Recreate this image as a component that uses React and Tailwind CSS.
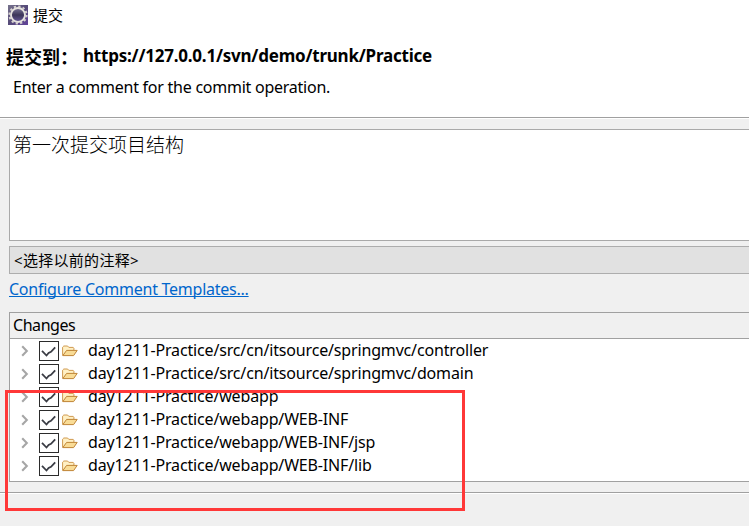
const rows = [
  'day1211-Practice/src/cn/itsource/springmvc/controller',
  'day1211-Practice/src/cn/itsource/springmvc/domain',
  'day1211-Practice/webapp',
  'day1211-Practice/webapp/WEB-INF',
  'day1211-Practice/webapp/WEB-INF/jsp',
  'day1211-Practice/webapp/WEB-INF/lib',
];

function GearIcon() {
  return (
    <svg className="block h-5 w-5 shrink-0" viewBox="0 0 20 20">
      <defs>
        <linearGradient id="gearBg" x1="0" y1="0" x2="1" y2="1">
          <stop offset="0" stopColor="#77738c" />
          <stop offset="0.5" stopColor="#554a78" />
          <stop offset="1" stopColor="#62439a" />
        </linearGradient>
        <linearGradient id="gearCore" x1="0" y1="0" x2="0" y2="1">
          <stop offset="0" stopColor="#7b7698" />
          <stop offset="0.5" stopColor="#3c3558" />
          <stop offset="1" stopColor="#66589a" />
        </linearGradient>
      </defs>
      <rect width="20" height="20" fill="url(#gearBg)" />
      <circle cx="10" cy="10" r="8.6" fill="none" stroke="#d6d2d0" strokeWidth="2" strokeDasharray="2.25 2.253" />
      <circle cx="10" cy="10" r="7" fill="url(#gearCore)" stroke="#e6e2de" strokeWidth="1.9" />
    </svg>
  );
}

function Chevron() {
  return (
    <svg className="block h-3 w-2 shrink-0" viewBox="0 0 8 12" fill="none">
      <path d="M1.2 1.2 5.8 6 1.2 10.8" stroke="#a6a6a6" strokeWidth="2.1" />
    </svg>
  );
}

function Check() {
  return (
    <svg className="ml-[10px] block h-5 w-5 shrink-0" viewBox="0 0 20 20" fill="none">
      <rect x="0.5" y="0.5" width="19" height="19" fill="#fff" stroke="#2b2b2b" />
      <path d="M3 9.8 7.5 14.5 9.6 12 12 10.8 16.2 6.3" stroke="#3a3c44" strokeWidth="1.8" />
    </svg>
  );
}

function Folder() {
  return (
    <svg className="ml-[3px] block h-3 w-4 shrink-0" viewBox="0 0 16 12">
      <path d="M.6 10.4V2.2L1.8 1h3.8l1.2 1.4h4.4l.7.8v2" fill="#fff0c4" stroke="#d09a50" strokeWidth="1" />
      <path d="M.8 10.6 4.6 5.4h10.6l-3.6 5.2Z" fill="#f9dc96" stroke="#bf8436" strokeWidth="1" strokeLinejoin="round" />
    </svg>
  );
}

export default function App() {
  return (
    <div className="relative flex h-[526px] w-[749px] flex-col overflow-hidden bg-[#f0f0f0] font-['Noto_Sans','Noto_Sans_CJK_SC',sans-serif] text-base whitespace-nowrap text-black">
      <header className="h-[119px] shrink-0 border-b border-white bg-white">
        <div className="flex h-full flex-col border-b border-[#a0a0a0]">
          <div className="flex h-[30px] items-center pl-2">
            <GearIcon />
            <span className="ml-[5px] font-['Noto_Sans_CJK_SC',sans-serif] text-[15px] leading-5">提交</span>
          </div>
          <div className="mt-[14px] flex h-6 items-center pl-[6px] text-[17px] font-bold tracking-[-0.22px]">
            <span className="w-[77px] shrink-0 pb-px font-['Noto_Sans_CJK_SC',sans-serif] text-lg leading-[22px] tracking-normal">提交到：</span>
            <span>https://127.0.0.1/svn/demo/trunk/Practice</span>
          </div>
          <p className="mt-[7px] pl-[13px] leading-6 tracking-[-0.25px]">Enter a comment for the commit operation.</p>
        </div>
      </header>

      <main className="flex shrink-0 flex-col pt-[10px] pl-[9px]">
        <div className="h-[112px] border border-r-0 border-[#a9a9a9] bg-white pt-[2px] pl-[3px] font-['Noto_Sans_CJK_SC',sans-serif] text-[19px] leading-6 font-light">
          第一次提交项目结构
        </div>
        <div className="mt-[5px] flex h-7 items-center border border-r-0 border-[#adadad] bg-[#e1e1e1] pl-1 text-[15px] tracking-[0.3px]">
          &lt;选择以前的注释&gt;
        </div>
        <a className="mt-[3px] h-[25px] leading-6 tracking-[-0.25px] text-[#0066cc] underline [text-decoration-skip-ink:none]">Configure Comment Templates...</a>
        <section className="mt-[10px] h-[170px] border border-r-0 border-[#a0a0a0] bg-white">
          <div className="h-[26px] border-b border-[#a0a0a0] bg-[#f0f0f0] pl-[3px] leading-[25px] tracking-[-0.45px]">Changes</div>
          {rows.map((path) => (
            <div key={path} className="flex h-[23px] items-center pl-[11px]">
              <Chevron />
              <Check />
              <Folder />
              <span className="ml-[10px] pb-px leading-[21px] tracking-[-0.16px]">{path}</span>
            </div>
          ))}
        </section>
      </main>

      <div className="mt-[10px] h-[2px] shrink-0 border-t border-b border-t-[#a0a0a0] border-b-white" />

      <div className="absolute top-[390px] left-[5px] h-[121px] w-[460px] border-3 border-[#ff3838]" />
    </div>
  );
}
